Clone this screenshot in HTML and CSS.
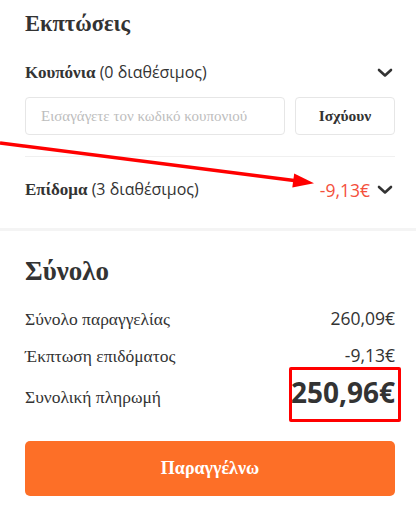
FILE: index.html
```html
<!DOCTYPE html>
<html lang="el">
<head>
    <meta charset="UTF-8">
    <meta name="viewport" content="width=device-width, initial-scale=1.0">
    <title>Καλάθι</title>
    <link rel="stylesheet" href="styles.css">
</head>
<body>
    <section class="discounts">
        <h2 class="title">Εκπτώσεις</h2>

        <div class="row">
            <span><b>Κουπόνια</b> <span class="count">(0 διαθέσιμος)</span></span>
            <svg class="chevron" width="16" height="10" viewBox="0 0 16 10"><path d="M2 2l6 5.5L14 2" fill="none" stroke="#333" stroke-width="2.6" stroke-linecap="round" stroke-linejoin="round"/></svg>
        </div>

        <div class="coupon">
            <input type="text" placeholder="Εισαγάγετε τον κωδικό κουπονιού">
            <button class="apply">Ισχύουν</button>
        </div>

        <div class="row allowance">
            <span><b>Επίδομα</b> <span class="count">(3 διαθέσιμος)</span></span>
            <span class="right">
                <span class="minus">-9,13€</span>
                <svg class="chevron" width="16" height="10" viewBox="0 0 16 10"><path d="M2 2l6 5.5L14 2" fill="none" stroke="#333" stroke-width="2.6" stroke-linecap="round" stroke-linejoin="round"/></svg>
            </span>
        </div>
    </section>

    <section class="summary">
        <h2 class="title big">Σύνολο</h2>

        <div class="line">
            <span>Σύνολο παραγγελίας</span>
            <span class="num">260,09€</span>
        </div>
        <div class="line">
            <span>Έκπτωση επιδόματος</span>
            <span class="num">-9,13€</span>
        </div>
        <div class="line total">
            <span>Συνολική πληρωμή</span>
            <span class="num marked">250,96€</span>
        </div>

        <button class="order">Παραγγέλνω</button>
    </section>

    <!-- annotation arrow -->
    <svg class="arrow" width="416" height="506" viewBox="0 0 416 506">
        <line x1="0" y1="143" x2="296" y2="180.8" stroke="#f00" stroke-width="3.5"/>
        <polygon points="314,183.2 292.3,187.6 294.2,173.4" fill="#f00"/>
    </svg>
</body>
</html>
```

FILE: styles.css
```css
body {
    margin: 0;
    font-family: "Liberation Serif", "Times New Roman", serif;
    color: #333;
    background: #fff;
    position: relative;
}
.discounts {
    padding: 10px 21px 26px 25px;
    border-bottom: 3px solid #f4f4f4;
}
.title {
    margin: 0;
    font-size: 22.5px;
    line-height: 28px;
    font-weight: bold;
}
.title.big {
    font-size: 27px;
    line-height: 32px;
}
.row {
    display: flex;
    justify-content: space-between;
    align-items: center;
    font-size: 17px;
    line-height: 24px;
    margin-top: 22px;
}
.count {
    font-family: "Open Sans", sans-serif;
    font-size: 16px;
}
.row .chevron {
    margin-right: 2px;
}
.coupon {
    display: flex;
    gap: 10px;
    margin-top: 12px;
    padding-bottom: 21px;
    border-bottom: 1px solid #f0f0f0;
}
.coupon input {
    flex: 1;
    height: 38px;
    box-sizing: border-box;
    border: 1px solid #e6e6e6;
    border-radius: 4px;
    padding: 0 15px;
    font-family: inherit;
    font-size: 15px;
    color: #333;
    outline: none;
}
.coupon input::placeholder {
    color: #bdbdbd;
}
.apply {
    width: 100px;
    height: 38px;
    background: #fff;
    border: 1px solid #e6e6e6;
    border-radius: 4px;
    font-family: inherit;
    font-size: 15.5px;
    font-weight: bold;
    color: #333;
    cursor: pointer;
}
.allowance {
    margin-top: 20px;
}
.right {
    display: flex;
    align-items: center;
    gap: 7px;
}
.minus {
    font-family: "Open Sans", sans-serif;
    font-size: 17.5px;
    color: #f4503c;
}
.summary {
    padding: 24px 21px 10px 25px;
}
.line {
    display: flex;
    justify-content: space-between;
    align-items: baseline;
    font-size: 17.5px;
    line-height: 24px;
    margin-top: 12px;
}
.line:first-of-type {
    margin-top: 19px;
}
.num {
    font-family: "Open Sans", sans-serif;
}
.total {
    margin-top: 6px;
    line-height: 36px;
}
.total .num {
    font-size: 28px;
    font-weight: bold;
}
.marked {
    position: relative;
}
.marked::after {
    content: "";
    position: absolute;
    left: -2px;
    right: -6px;
    top: -7px;
    bottom: -12px;
    border: 3px solid #f00;
    border-radius: 2px;
}
.order {
    display: block;
    width: 100%;
    height: 55px;
    margin-top: 26px;
    background: #fd6f27;
    color: #fff;
    border: none;
    border-radius: 5px;
    font-family: inherit;
    font-size: 18px;
    font-weight: bold;
    cursor: pointer;
}
.arrow {
    position: absolute;
    left: 0;
    top: 0;
    pointer-events: none;
}
```
